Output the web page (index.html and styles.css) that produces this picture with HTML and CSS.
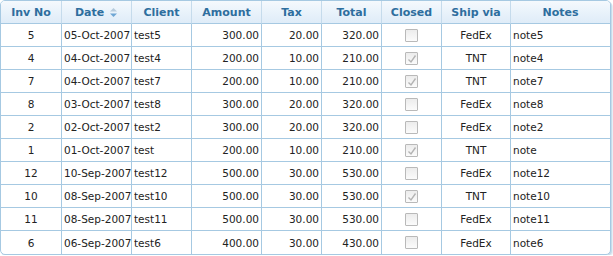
FILE: index.html
```html
<!DOCTYPE html>
<html>
<head>
<meta charset="utf-8">
<link rel="stylesheet" href="styles.css">
</head>
<body>
<div class="grid">
  <table class="gtable">
    <thead>
      <tr>
        <th class="c-inv">Inv No</th>
        <th class="c-date">Date <span class="sort"><svg width="9" height="11" viewBox="0 0 9 11"><path d="M1 4.5 L4.5 1 L8 4.5 Z" fill="#b7cbdc"/><path d="M1 6.5 L8 6.5 L4.5 10 Z" fill="#6ea6d4"/></svg></span></th>
        <th class="c-client">Client</th>
        <th class="c-amt">Amount</th>
        <th class="c-tax">Tax</th>
        <th class="c-total">Total</th>
        <th class="c-closed">Closed</th>
        <th class="c-ship">Ship via</th>
        <th class="c-notes">Notes</th>
      </tr>
    </thead>
    <tbody>
      <tr><td class="center">5</td><td>05-Oct-2007</td><td>test5</td><td class="right">300.00</td><td class="right">20.00</td><td class="right">320.00</td><td class="center"><span class="cb"></span></td><td class="center">FedEx</td><td>note5</td></tr>
      <tr><td class="center">4</td><td>04-Oct-2007</td><td>test4</td><td class="right">200.00</td><td class="right">10.00</td><td class="right">210.00</td><td class="center"><span class="cb checked"><svg width="10" height="10" viewBox="0 0 10 10"><path d="M1.5 5.5 L4 8 L8.5 1.5" fill="none" stroke="#b4b4b4" stroke-width="1.4"/></svg></span></td><td class="center">TNT</td><td>note4</td></tr>
      <tr><td class="center">7</td><td>04-Oct-2007</td><td>test7</td><td class="right">200.00</td><td class="right">10.00</td><td class="right">210.00</td><td class="center"><span class="cb checked"><svg width="10" height="10" viewBox="0 0 10 10"><path d="M1.5 5.5 L4 8 L8.5 1.5" fill="none" stroke="#b4b4b4" stroke-width="1.4"/></svg></span></td><td class="center">TNT</td><td>note7</td></tr>
      <tr><td class="center">8</td><td>03-Oct-2007</td><td>test8</td><td class="right">300.00</td><td class="right">20.00</td><td class="right">320.00</td><td class="center"><span class="cb"></span></td><td class="center">FedEx</td><td>note8</td></tr>
      <tr><td class="center">2</td><td>02-Oct-2007</td><td>test2</td><td class="right">300.00</td><td class="right">20.00</td><td class="right">320.00</td><td class="center"><span class="cb"></span></td><td class="center">FedEx</td><td>note2</td></tr>
      <tr><td class="center">1</td><td>01-Oct-2007</td><td>test</td><td class="right">200.00</td><td class="right">10.00</td><td class="right">210.00</td><td class="center"><span class="cb checked"><svg width="10" height="10" viewBox="0 0 10 10"><path d="M1.5 5.5 L4 8 L8.5 1.5" fill="none" stroke="#b4b4b4" stroke-width="1.4"/></svg></span></td><td class="center">TNT</td><td>note</td></tr>
      <tr><td class="center">12</td><td>10-Sep-2007</td><td>test12</td><td class="right">500.00</td><td class="right">30.00</td><td class="right">530.00</td><td class="center"><span class="cb"></span></td><td class="center">FedEx</td><td>note12</td></tr>
      <tr><td class="center">10</td><td>08-Sep-2007</td><td>test10</td><td class="right">500.00</td><td class="right">30.00</td><td class="right">530.00</td><td class="center"><span class="cb checked"><svg width="10" height="10" viewBox="0 0 10 10"><path d="M1.5 5.5 L4 8 L8.5 1.5" fill="none" stroke="#b4b4b4" stroke-width="1.4"/></svg></span></td><td class="center">TNT</td><td>note10</td></tr>
      <tr><td class="center">11</td><td>08-Sep-2007</td><td>test11</td><td class="right">500.00</td><td class="right">30.00</td><td class="right">530.00</td><td class="center"><span class="cb"></span></td><td class="center">FedEx</td><td>note11</td></tr>
      <tr><td class="center">6</td><td>06-Sep-2007</td><td>test6</td><td class="right">400.00</td><td class="right">30.00</td><td class="right">430.00</td><td class="center"><span class="cb"></span></td><td class="center">FedEx</td><td>note6</td></tr>
    </tbody>
  </table>
</div>
</body>
</html>
```

FILE: styles.css
```css
html, body {
  margin: 0;
  padding: 0;
  background: #ffffff;
}

.grid {
  width: 609px;
  border: 1px solid #a6c9e2;
  border-radius: 5px;
  overflow: hidden;
  background: #ffffff;
  box-shadow: 1px 1px 0 #c9dcea, 2px 2px 0 #e6eef5;
  font-family: "Lucida Grande", "Lucida Sans", "DejaVu Sans", sans-serif;
  font-size: 10.5px;
  color: #222222;
}

.gtable {
  width: 609px;
  table-layout: fixed;
  border-collapse: separate;
  border-spacing: 0;
}

.gtable th,
.gtable td {
  box-sizing: border-box;
  padding: 0 2px;
  white-space: nowrap;
  overflow: hidden;
  border-right: 1px solid #a6c9e2;
  border-bottom: 1px solid #a6c9e2;
}

.gtable th:last-child,
.gtable td:last-child {
  border-right: none;
}

.gtable tbody tr:last-child td {
  border-bottom: none;
}

.gtable th {
  height: 23px;
  background: linear-gradient(#f5f9fd 0%, #eaf3fb 45%, #dfecf8 100%);
  color: #2e6e9e;
  font-weight: bold;
  font-size: 11px;
  text-align: center;
  border-right-color: #c5dbec;
  border-bottom-color: #a6c9e2;
}

.gtable td {
  height: 23px;
}

.c-inv { width: 61px; }
.c-date { width: 70px; }
.c-client { width: 60px; }
.c-amt { width: 70px; }
.c-tax { width: 60px; }
.c-total { width: 60px; }
.c-closed { width: 60px; }
.c-ship { width: 69px; }
.c-notes { width: 99px; }

.sort {
  display: inline-block;
  vertical-align: middle;
  margin-left: 1px;
  line-height: 0;
}

.center { text-align: center; }
.right { text-align: right; }

.cb {
  display: inline-block;
  box-sizing: border-box;
  width: 13px;
  height: 13px;
  border: 1px solid #b9b9b9;
  border-radius: 1px;
  background: linear-gradient(#ececec, #fbfbfb);
  vertical-align: middle;
  line-height: 0;
}

.cb svg {
  margin: 1px 0 0 1px;
}
```
